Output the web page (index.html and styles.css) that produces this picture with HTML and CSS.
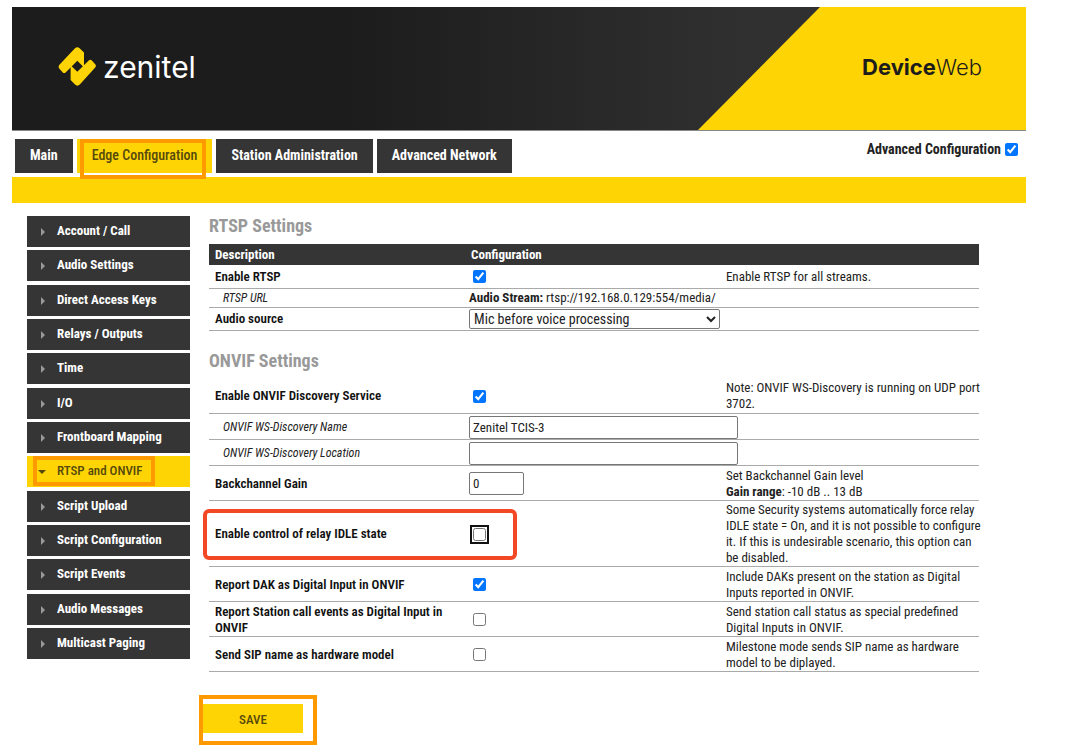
FILE: index.html
```html
<!DOCTYPE html>
<html lang="en">
<head>
<meta charset="utf-8">
<title>Zenitel DeviceWeb</title>
<link rel="stylesheet" href="styles.css">
</head>
<body>
<div class="page">
  <header class="banner">
    <div class="brand">
      <svg class="brand-mark" viewBox="0 0 38 40" aria-hidden="true">
        <path d="M1.2 18 17 1.2Q19.3 -0.8 21.6 1.2L26 5.6V20.4L19.3 13.8 7.6 25.4Q6.2 26.4 4.8 25.4L1.2 21.4Q0 19.8 1.2 18Z"/>
        <path d="M37.2 20.6 21.8 37.6Q19.3 39.8 17 37.6L12.6 33V18.2L19.3 24.8 31 13.2Q32.3 12.2 33.6 13.2L37.2 17.2Q38.6 18.8 37.2 20.6Z"/>
      </svg>
      <span class="brand-name">zenitel</span>
    </div>
    <div class="product"><b>Device</b>Web</div>
  </header>

  <div class="topbar">
    <nav class="tabs">
      <a class="tab" href="#">Main</a>
      <a class="tab tab-active" href="#">Edge Configuration</a>
      <a class="tab" href="#">Station Administration</a>
      <a class="tab" href="#">Advanced Network</a>
    </nav>
    <label class="advanced">Advanced Configuration <input type="checkbox" class="check" checked></label>
  </div>
  <div class="strip"></div>

  <div class="body">
    <nav class="side">
      <a class="side-item" href="#">Account / Call</a>
      <a class="side-item" href="#">Audio Settings</a>
      <a class="side-item" href="#">Direct Access Keys</a>
      <a class="side-item" href="#">Relays / Outputs</a>
      <a class="side-item" href="#">Time</a>
      <a class="side-item" href="#">I/O</a>
      <a class="side-item" href="#">Frontboard Mapping</a>
      <a class="side-item side-active" href="#">RTSP and ONVIF</a>
      <a class="side-item" href="#">Script Upload</a>
      <a class="side-item" href="#">Script Configuration</a>
      <a class="side-item" href="#">Script Events</a>
      <a class="side-item" href="#">Audio Messages</a>
      <a class="side-item" href="#">Multicast Paging</a>
    </nav>

    <main class="content">
      <h2 class="heading">RTSP Settings</h2>
      <table class="settings">
        <colgroup><col class="col-name"><col class="col-value"><col class="col-note"></colgroup>
        <thead>
          <tr><th>Description</th><th class="th-config">Configuration</th><th></th></tr>
        </thead>
        <tbody>
          <tr class="row-s">
            <td class="name"><label for="rtsp">Enable RTSP</label></td>
            <td><input id="rtsp" type="checkbox" class="check check-cell" checked></td>
            <td class="note">Enable RTSP for all streams.</td>
          </tr>
          <tr class="row-xs">
            <td class="sub">RTSP URL</td>
            <td colspan="2"><b>Audio Stream:</b> rtsp://192.168.0.129:554/media/</td>
          </tr>
          <tr class="row-s">
            <td class="name"><label for="source">Audio source</label></td>
            <td><select id="source" class="field select"><option>Mic before voice processing</option></select></td>
            <td class="note"></td>
          </tr>
        </tbody>
      </table>

      <h2 class="heading heading-next">ONVIF Settings</h2>
      <table class="settings">
        <colgroup><col class="col-name"><col class="col-value"><col class="col-note"></colgroup>
        <tbody>
          <tr class="row-l">
            <td class="name"><label for="discovery">Enable ONVIF Discovery Service</label></td>
            <td><input id="discovery" type="checkbox" class="check check-cell" checked></td>
            <td class="note">Note: ONVIF WS-Discovery is running on UDP port<br>3702.</td>
          </tr>
          <tr class="row-m">
            <td class="sub"><label for="dname">ONVIF WS-Discovery Name</label></td>
            <td colspan="2"><input id="dname" type="text" class="field text" value="Zenitel TCIS-3"></td>
          </tr>
          <tr class="row-m">
            <td class="sub"><label for="dloc">ONVIF WS-Discovery Location</label></td>
            <td colspan="2"><input id="dloc" type="text" class="field text"></td>
          </tr>
          <tr class="row-l">
            <td class="name"><label for="gain">Backchannel Gain</label></td>
            <td><input id="gain" type="text" class="field gain" value="0"></td>
            <td class="note">Set Backchannel Gain level<br><b>Gain range</b>: -10 dB .. 13 dB</td>
          </tr>
          <tr class="row-xl">
            <td class="name marked"><label for="idle">Enable control of relay IDLE state</label></td>
            <td><input id="idle" type="checkbox" class="check check-cell check-focus"></td>
            <td class="note">Some Security systems automatically force relay<br>IDLE state = On, and it is not possible to configure<br>it. If this is undesirable scenario, this option can<br>be disabled.</td>
          </tr>
          <tr class="row-l">
            <td class="name"><label for="dak">Report DAK as Digital Input in ONVIF</label></td>
            <td><input id="dak" type="checkbox" class="check check-cell" checked></td>
            <td class="note">Include DAKs present on the station as Digital<br>Inputs reported in ONVIF.</td>
          </tr>
          <tr class="row-l">
            <td class="name"><label for="events">Report Station call events as Digital Input in ONVIF</label></td>
            <td><input id="events" type="checkbox" class="check check-cell"></td>
            <td class="note">Send station call status as special predefined<br>Digital Inputs in ONVIF.</td>
          </tr>
          <tr class="row-l">
            <td class="name"><label for="sip">Send SIP name as hardware model</label></td>
            <td><input id="sip" type="checkbox" class="check check-cell"></td>
            <td class="note">Milestone mode sends SIP name as hardware<br>model to be diplayed.</td>
          </tr>
        </tbody>
      </table>
    </main>
  </div>
  <div class="actions"><button class="save" type="button">SAVE</button></div>
</div>
</body>
</html>
```
FILE: styles.css
```css
*, *::before, *::after { box-sizing: border-box; }

body {
  margin: 0;
  background: #fff;
  color: #222;
  font: 13px/16px "Roboto Condensed", "Liberation Sans Narrow", Roboto, sans-serif;
}

a { color: inherit; text-decoration: none; }

.page { margin: 7px 62px 0 12px; }

.banner {
  position: relative;
  display: flex;
  justify-content: space-between;
  align-items: center;
  height: 124px;
  padding: 0 44px 3px 46px;
  background: linear-gradient(90deg, #1c1c1c 33%, #303030 72%);
  border-bottom: 1px solid #888;
}

.banner::before {
  content: "";
  position: absolute;
  top: 0;
  right: 0;
  bottom: 0;
  width: 328px;
  background: #ffd404;
  clip-path: polygon(122px 0, 100% 0, 100% 100%, 0 100%);
}

.brand { display: flex; align-items: center; gap: 7px; }
.brand-mark { width: 38px; height: 40px; fill: #ffd404; }
.brand-name { color: #fff; font: 30px/40px Inter, sans-serif; }

.product {
  position: relative;
  color: #1c1c1c;
  font: 300 22px/30px Inter, sans-serif;
}
.product b { font-weight: 700; }

.topbar {
  display: flex;
  justify-content: space-between;
  align-items: flex-start;
  padding: 8px 8px 4px 3px;
}

.tabs { display: flex; gap: 4px; font-size: 14px; font-weight: 700; }

.tab {
  padding: 8px 15px 10px;
  background: #353535;
  color: #fff;
}

.tab-active {
  position: relative;
  background: #ffd404;
  color: #54490c;
  font-weight: 500;
}

.tab-active::after {
  content: "";
  position: absolute;
  inset: 0 6px -6px 3px;
  border: 4px solid #ff9900;
}

.advanced {
  display: flex;
  align-items: center;
  gap: 4px;
  padding-top: 2px;
  font-size: 14px;
  font-weight: 700;
}

.check { width: 13px; height: 13px; margin: 0; accent-color: #0075ff; }

.strip { height: 26px; background: #ffd404; }

.body { display: flex; gap: 19px; padding: 13px 47px 0 15px; }

.side {
  display: flex;
  flex: 0 0 163px;
  flex-direction: column;
  justify-content: space-between;
  padding-bottom: 13px;
  font-weight: 700;
}

.side-item {
  position: relative;
  padding: 7px 8px 8px 30px;
  background: #353535;
  color: #fff;
}

.side-item::before {
  content: "";
  position: absolute;
  left: 14px;
  top: 12px;
  border: 4px solid transparent;
  border-left-color: #999;
  border-right: 0;
}

.side-active { background: #ffd404; color: #54490c; font-weight: 500; }

.side-active::before {
  left: 11px;
  top: 14px;
  border: 4px solid transparent;
  border-top-color: #54490c;
  border-bottom: 0;
}

.side-active::after {
  content: "";
  position: absolute;
  inset: 0 35px 1px 6px;
  border: 4px solid #ff9900;
}

.content { flex: 1; min-width: 0; }

.heading {
  margin: 0 0 8px;
  color: #999;
  font-size: 18px;
  line-height: 20px;
}
.heading-next { margin: 20px 0 8px; }

.settings {
  width: 100%;
  border-collapse: collapse;
  table-layout: fixed;
}

.col-name { width: 33%; }
.col-value { width: 34%; }
.col-note { width: 33%; }

.settings th {
  height: 21px;
  padding: 1px 6px 0;
  background: #353535;
  color: #fff;
  text-align: left;
}
.settings .th-config { padding-left: 8px; }

.settings td {
  padding: 1px 0 0 6px;
  border-bottom: 1px solid #aaa;
  vertical-align: middle;
}

.settings .name { color: #111; font-weight: 600; }
.settings .sub { padding-left: 14px; font-size: 12px; font-style: italic; }
.settings .note { padding-left: 1px; white-space: nowrap; }

.row-xs { height: 19px; }
.row-s { height: 23px; }
.row-m { height: 26px; }
.row-l { height: 35px; }
.row-xl { height: 66px; }

.field {
  display: block;
  border: 1px solid #777;
  border-radius: 2px;
  background: #fff;
  color: #222;
  font: inherit;
}
.select { width: 251px; height: 20px; font-size: 14px; }
.text { width: 269px; height: 23px; padding: 0 3px; }
.gain { width: 55px; height: 23px; padding: 0 3px; }

.check-cell { display: block; margin-left: 4px; }
.check-focus { outline: 2px solid #111; outline-offset: 1px; border-radius: 2px; }

.marked { position: relative; }
.marked::after {
  content: "";
  position: absolute;
  left: -6px;
  top: 8px;
  width: 314px;
  height: 51px;
  border: 4px solid #f24826;
  border-radius: 6px;
  pointer-events: none;
}

.actions {
  width: 118px;
  margin: 23px 0 0 187px;
  padding: 5px 10px 8px 0;
  border: 4px solid #ff9900;
}

.save {
  display: block;
  width: 100%;
  height: 29px;
  padding: 2px 0 0;
  border: 0;
  background: #ffd404;
  color: #54490c;
  font: inherit;
  font-weight: 500;
}
```
